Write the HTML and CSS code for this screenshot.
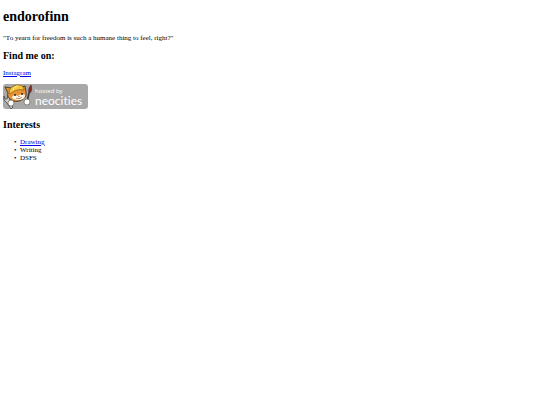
FILE: index.html
```html
<!DOCTYPE html>
<html lang="en">
<head>
   <meta charset="UTF-8">
   <meta name="viewport" content="width=device-width, initial-scale=1.0">
   <title>endorofinn</title>
   <link rel="stylesheet" href="styles.css">
</head>
<body>
   <h1>endorofinn</h1>
   <p>"To yearn for freedom is such a humane thing to feel, right?"</p>

   <h2>Find me on:</h2>
   <p><a href="#instagram">Instagram</a></p>

   <a class="badge" href="#neocities">
      <svg class="cat" viewBox="0 0 30 25" aria-hidden="true">
         <!-- wrench -->
         <path d="M1 12l1 3 2 0 1-3 2 3-1 3 4 5-2 2-4-6-3-3z" fill="#c9cdd1" stroke="#444" stroke-width=".8"/>
         <!-- brush -->
         <path d="M26 9l-2 9" stroke="#3c3531" stroke-width="1.6"/>
         <path d="M26 9c-1-3 0-5 2-8 1 3 1 6-1 8z" fill="#8c2f27" stroke="#3b2220" stroke-width=".6"/>
         <!-- head and ears -->
         <path d="M5 9L2 3l6 1c4-3 8-3 11-1l3-1 1 6c1 4-1 6-4 8-4 2-9 2-12-1-2-2-3-3-2-6z" fill="#e99235" stroke="#4a3018" stroke-width=".9"/>
         <path d="M9 13c1-2 4-2 6-1 2-2 5-2 7-1 0 3-2 5-7 5-3 0-6-1-6-3z" fill="#fff6e8"/>
         <!-- helmet -->
         <path d="M6 8c1-5 5-7 9-7 4 0 6 2 6 5-5-1-9 0-14 4z" fill="#f2c63f" stroke="#7c5a16" stroke-width=".7"/>
         <path d="M10 6c1-3 3-4 5-4" fill="none" stroke="#fff0a0" stroke-width="1"/>
         <!-- face -->
         <circle cx="12" cy="11" r="1" fill="#33261d"/>
         <circle cx="19" cy="10" r="1" fill="#33261d"/>
         <path d="M15 12l2 0-1 1z" fill="#a6442f"/>
         <path d="M13 14c2 1 4 1 6-1" fill="none" stroke="#6b3a22" stroke-width=".6"/>
         <!-- paws -->
         <circle cx="8" cy="19" r="3" fill="#fff" stroke="#5b4a3c" stroke-width=".6"/>
         <circle cx="24" cy="18" r="3" fill="#fff" stroke="#5b4a3c" stroke-width=".6"/>
      </svg>
      <span class="badge-text">
         <span class="hosted">hosted by</span>
         <span class="name">neocities</span>
      </span>
   </a>

   <h2>Interests</h2>
   <ul>
      <li><a href="#drawing">Drawing</a></li>
      <li>Writing</li>
      <li>DSFS</li>
   </ul>
</body>
</html>
```

FILE: styles.css
```css
body {
   font-family: "Liberation Serif", "Times New Roman", serif;
   font-size: 7px;
   line-height: 8px;
   margin: 3px;
   background-color: #fff;
   color: #000;
}

h1 {
   font-size: 14px;
   line-height: 16px;
   margin: 6px 0 9px;
}

h2 {
   font-size: 10px;
   line-height: 12px;
   margin: 8px 0 7px;
}

p {
   margin: 7px 0;
}

a {
   color: #0000ee;
}

ul {
   margin: 7px 0;
   padding-left: 17px;
   list-style-type: "•\00a0\00a0";
}

.badge {
   display: flex;
   width: fit-content;
   height: 25px;
   margin-bottom: 10px;
   padding-right: 6px;
   border-radius: 3px;
   background-color: #a8a8a8;
   color: #fff;
   font-family: "Open Sans", "Noto Sans", sans-serif;
   text-decoration: none;
}

.cat {
   width: 30px;
   height: 25px;
   margin-right: 2px;
}

.badge-text {
   display: flex;
   flex-direction: column;
   padding-top: 3px;
}

.hosted {
   font-size: 6px;
   line-height: 8px;
}

.name {
   font-family: Lato, sans-serif;
   font-size: 12px;
   line-height: 12px;
   font-variant-ligatures: none;
}
```
